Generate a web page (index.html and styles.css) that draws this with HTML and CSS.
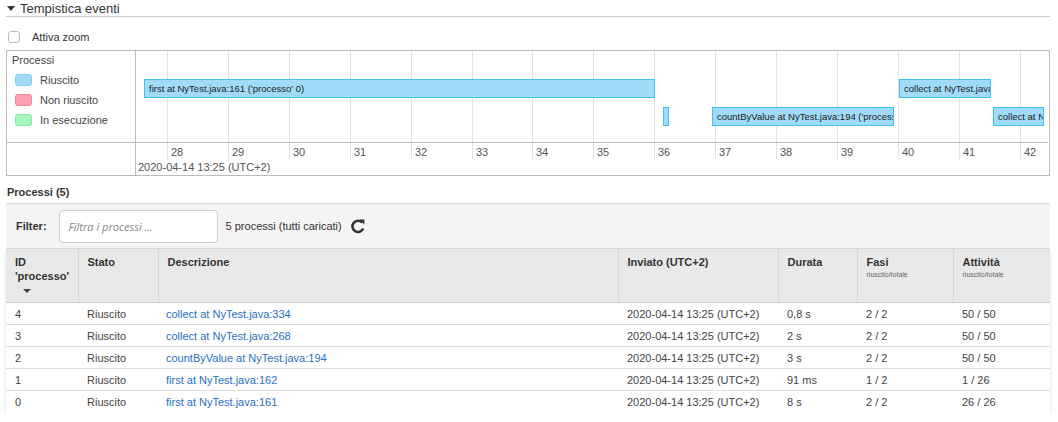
FILE: index.html
```html
<!DOCTYPE html>
<html>
<head>
<meta charset="utf-8">
<link rel="stylesheet" href="styles.css">
</head>
<body>
<div class="page">
  <div class="section-title"><span class="caret"></span>Tempistica eventi</div>
  <div class="zoom-row"><span class="checkbox"></span><span>Attiva zoom</span></div>

  <div class="timeline">
    <div class="legend">
      <div class="legend-title">Processi</div>
      <div class="legend-item"><span class="sw ok"></span>Riuscito</div>
      <div class="legend-item"><span class="sw fail"></span>Non riuscito</div>
      <div class="legend-item"><span class="sw run"></span>In esecuzione</div>
    </div>
    <div class="chart">
      <div class="grid" style="left:31px"></div>
      <div class="grid" style="left:92px"></div>
      <div class="grid" style="left:153px"></div>
      <div class="grid" style="left:214px"></div>
      <div class="grid" style="left:275px"></div>
      <div class="grid" style="left:336px"></div>
      <div class="grid" style="left:396px"></div>
      <div class="grid" style="left:457px"></div>
      <div class="grid" style="left:518px"></div>
      <div class="grid" style="left:579px"></div>
      <div class="grid" style="left:640px"></div>
      <div class="grid" style="left:701px"></div>
      <div class="grid" style="left:762px"></div>
      <div class="grid" style="left:823px"></div>
      <div class="grid" style="left:884px"></div>
      <div class="bar" style="left:8px;top:28px;width:511px">first at NyTest.java:161 ('processo' 0)</div>
      <div class="bar" style="left:763px;top:28px;width:92px">collect at NyTest.java:334 ('processo' 4)</div>
      <div class="bar" style="left:527px;top:56px;width:6px"></div>
      <div class="bar" style="left:576px;top:56px;width:182px">countByValue at NyTest.java:194 ('processo' 2)</div>
      <div class="bar" style="left:857px;top:56px;width:51px">collect at NyTest.java:268 ('processo' 3)</div>
    </div>
    <div class="axis-legend"></div>
    <div class="axis">
      <div class="tick" style="left:31px">28</div>
      <div class="tick" style="left:92px">29</div>
      <div class="tick" style="left:153px">30</div>
      <div class="tick" style="left:214px">31</div>
      <div class="tick" style="left:275px">32</div>
      <div class="tick" style="left:336px">33</div>
      <div class="tick" style="left:396px">34</div>
      <div class="tick" style="left:457px">35</div>
      <div class="tick" style="left:518px">36</div>
      <div class="tick" style="left:579px">37</div>
      <div class="tick" style="left:640px">38</div>
      <div class="tick" style="left:701px">39</div>
      <div class="tick" style="left:762px">40</div>
      <div class="tick" style="left:823px">41</div>
      <div class="tick" style="left:884px">42</div>
      <div class="axis-date">2020-04-14 13:25 (UTC+2)</div>
    </div>
  </div>

  <div class="jobs-title">Processi (5)</div>
  <div class="filter-bar">
    <span class="filter-label">Filter:</span>
    <span class="filter-input">Filtra i processi ...</span>
    <span class="filter-count">5 processi (tutti caricati)</span>
    <svg class="refresh" width="16" height="16" viewBox="0 0 16 16">
      <path d="M12.2 4.6 A5.6 5.6 0 1 0 13.2 10.6" fill="none" stroke="#333" stroke-width="2.6"/>
      <path d="M9.6 1.6 L14.4 1.6 L14.4 6.6 Z" fill="#333"/>
    </svg>
  </div>

  <table class="jobs">
    <thead>
      <tr>
        <th class="c-id">ID<br>'processo'<br><span class="sort"></span></th>
        <th class="c-st">Stato</th>
        <th class="c-desc">Descrizione</th>
        <th class="c-sub">Inviato (UTC+2)</th>
        <th class="c-dur">Durata</th>
        <th class="c-fasi">Fasi<div class="sub">riuscito/totale</div></th>
        <th class="c-att">Attività<div class="sub">riuscito/totale</div></th>
      </tr>
    </thead>
    <tbody>
      <tr><td>4</td><td>Riuscito</td><td><a>collect at NyTest.java:334</a></td><td>2020-04-14 13:25 (UTC+2)</td><td>0,8 s</td><td>2 / 2</td><td>50 / 50</td></tr>
      <tr><td>3</td><td>Riuscito</td><td><a>collect at NyTest.java:268</a></td><td>2020-04-14 13:25 (UTC+2)</td><td>2 s</td><td>2 / 2</td><td>50 / 50</td></tr>
      <tr><td>2</td><td>Riuscito</td><td><a>countByValue at NyTest.java:194</a></td><td>2020-04-14 13:25 (UTC+2)</td><td>3 s</td><td>2 / 2</td><td>50 / 50</td></tr>
      <tr><td>1</td><td>Riuscito</td><td><a>first at NyTest.java:162</a></td><td>2020-04-14 13:25 (UTC+2)</td><td>91 ms</td><td>1 / 2</td><td>1 / 26</td></tr>
      <tr><td>0</td><td>Riuscito</td><td><a>first at NyTest.java:161</a></td><td>2020-04-14 13:25 (UTC+2)</td><td>8 s</td><td>2 / 2</td><td>26 / 26</td></tr>
    </tbody>
  </table>
</div>
</body>
</html>
```

FILE: styles.css
```css
html, body {
  margin: 0;
  padding: 0;
  background: #fff;
}
body {
  font-family: "Liberation Sans", Arial, sans-serif;
  font-size: 11px;
  color: #333;
}
.page {
  padding: 0 8px 0 6px;
}
.section-title {
  display: flex;
  align-items: center;
  height: 16px;
  font-size: 13px;
  color: #333;
  border-bottom: 1px solid #ccc;
  padding-left: 1px;
}
.caret {
  width: 0;
  height: 0;
  border-left: 4px solid transparent;
  border-right: 4px solid transparent;
  border-top: 5px solid #333;
  margin-right: 5px;
}
.zoom-row {
  display: flex;
  align-items: center;
  height: 20px;
  margin-top: 10px;
  padding-left: 2px;
  font-size: 11px;
}
.checkbox {
  width: 10px;
  height: 10px;
  border: 1px solid #bbb;
  border-radius: 3px;
  margin-right: 12px;
  background: #fff;
}
.timeline {
  margin-top: 3px;
  display: grid;
  grid-template-columns: 129px 912px;
  grid-template-rows: 92px 32px;
  border: 1px solid #bbb;
  width: 1042px;
}
.legend {
  border-right: 1px solid #bbb;
  border-bottom: 1px solid #bbb;
  padding: 3px 0 0 5px;
  font-size: 11px;
  color: #444;
}
.legend-title {
  height: 14px;
  margin-bottom: 2px;
}
.legend-item {
  display: flex;
  align-items: center;
  height: 20px;
  padding-left: 3px;
}
.sw {
  width: 15px;
  height: 10px;
  border: 1px solid;
  border-radius: 3px;
  margin-right: 8px;
}
.sw.ok { background: #a0dcfa; border-color: #7fcdf2; }
.sw.fail { background: #ff9fb1; border-color: #f78399; }
.sw.run { background: #a5f5c1; border-color: #82e6a4; }
.chart {
  position: relative;
  border-bottom: 1px solid #bbb;
  overflow: hidden;
}
.grid {
  position: absolute;
  top: 0;
  bottom: 0;
  width: 1px;
  background: #e3e3e3;
}
.bar {
  position: absolute;
  box-sizing: border-box;
  height: 19px;
  line-height: 17px;
  background: #a0dcfa;
  border: 1px solid #3fc1f5;
  font-size: 9.5px;
  color: #222;
  padding-left: 4px;
  white-space: nowrap;
  overflow: hidden;
}
.axis-legend {
  border-right: 1px solid #bbb;
}
.axis {
  position: relative;
  font-size: 11px;
  color: #555;
}
.tick {
  position: absolute;
  top: 0;
  height: 16px;
  border-left: 1px solid #e3e3e3;
  padding-left: 3px;
  line-height: 18px;
}
.axis-date {
  position: absolute;
  left: 2px;
  top: 17px;
  line-height: 14px;
}
.jobs-title {
  font-weight: bold;
  font-size: 11px;
  margin-top: 9px;
  height: 14px;
  line-height: 14px;
  padding-left: 1px;
}
.filter-bar {
  margin-top: 4px;
  display: flex;
  align-items: center;
  height: 44px;
  background: #f4f4f4;
  border-top: 1px solid #ddd;
  padding-left: 10px;
  width: 1034px;
  box-sizing: content-box;
}
.filter-label {
  font-weight: bold;
  margin-right: 12px;
}
.filter-input {
  width: 148px;
  height: 31px;
  line-height: 31px;
  border: 1px solid #ccc;
  border-radius: 4px;
  background: #fff;
  padding-left: 9px;
  font-family: "Open Sans", sans-serif;
  font-style: italic;
  font-size: 11px;
  color: #888;
  margin-right: 8px;
}
.filter-count {
  margin-right: 8px;
}
.refresh {
  display: block;
}
.jobs {
  border-collapse: collapse;
  width: 1044px;
  table-layout: fixed;
  box-shadow: 0 3px 4px rgba(0,0,0,0.12);
}
.jobs th {
  box-sizing: border-box;
  background: #e9e9e9;
  text-align: left;
  vertical-align: top;
  font-weight: bold;
  font-size: 11px;
  line-height: 14px;
  color: #333;
  padding: 6px 8px 0 9px;
  height: 54px;
  border-left: 1px solid #d6d6d6;
  border-top: 1px solid #d6d6d6;
  border-bottom: 1px solid #cfcfcf;
}
.jobs th:first-child { border-left: none; }
.c-id { width: 72px; }
.c-st { width: 80px; }
.c-desc { width: 460px; }
.c-sub { width: 160px; }
.c-dur { width: 79px; }
.c-fasi { width: 96px; }
.sort {
  display: inline-block;
  width: 0;
  height: 0;
  border-left: 4px solid transparent;
  border-right: 4px solid transparent;
  border-top: 4px solid #444;
  margin-left: 8px;
  vertical-align: middle;
}
.sub {
  font-weight: normal;
  font-size: 7px;
  line-height: 9px;
  color: #666;
  margin-top: 1px;
}
.jobs td {
  box-sizing: border-box;
  height: 22px;
  padding: 0 8px 0 9px;
  border-bottom: 1px solid #ddd;
  font-size: 11px;
  color: #444;
  white-space: nowrap;
}
.jobs td:nth-child(3) { padding-left: 8px; }
.jobs tbody tr:last-child td { border-bottom: none; }
.jobs a {
  color: #2671c5;
  text-decoration: none;
}
```
